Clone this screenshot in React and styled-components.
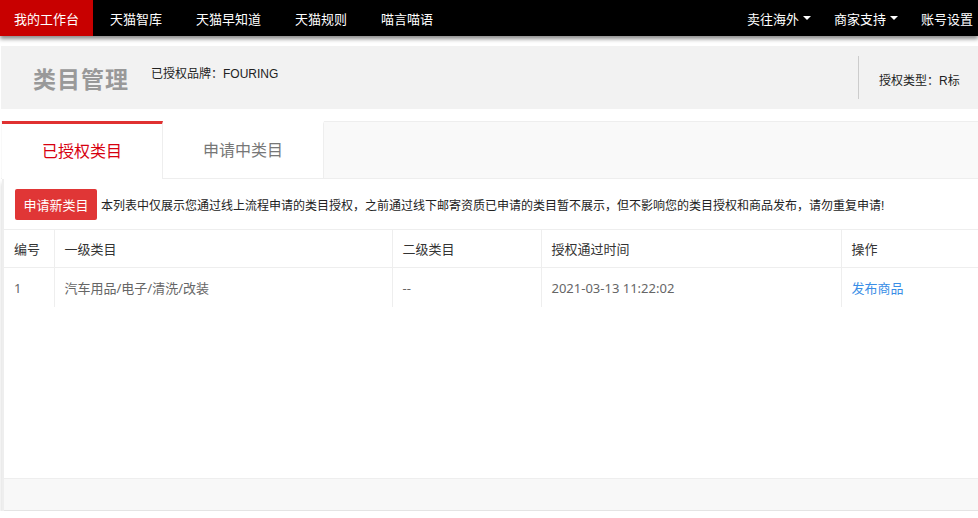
import React from 'react';
import styled, { createGlobalStyle } from 'styled-components';

const GlobalStyle = createGlobalStyle`
  html, body {
    margin: 0;
    padding: 0;
    background: #fff;
    font-family: 'Liberation Sans', Arial, 'Noto Sans CJK SC', sans-serif;
    font-size: 12px;
    color: #333;
  }
`;

const TopNav = styled.div`
  height: 36px;
  background: #000;
  display: flex;
  align-items: stretch;
  box-shadow: 0 3px 4px rgba(0, 0, 0, 0.45);
  position: relative;
  z-index: 2;
`;

const NavGroup = styled.div`
  display: flex;
`;

const RightGroup = styled.div`
  display: flex;
  margin-left: auto;
  padding-right: 5px;
  gap: 23px;
`;

const NavItem = styled.div`
  display: flex;
  align-items: center;
  padding: 0 ${(p) => p.$pad ?? 16}px;
  color: #fff;
  font-size: 13px;
  background: ${(p) => (p.$active ? '#c80000' : 'transparent')};
  white-space: nowrap;
`;

const Caret = styled.span`
  display: inline-block;
  width: 0;
  height: 0;
  margin-left: 4px;
  border-left: 4px solid transparent;
  border-right: 4px solid transparent;
  border-top: 4px solid #fff;
`;

const Page = styled.div`
  padding: 10px 0 0 1px;
`;

const Header = styled.div`
  background: #f2f2f2;
  height: 63px;
  display: flex;
  align-items: center;
  padding-left: 32px;
`;

const Title = styled.h1`
  margin: 0;
  font-size: 23px;
  font-weight: bold;
  color: #999;
  font-family: 'Noto Sans CJK SC', sans-serif;
  letter-spacing: 1px;
`;

const Brand = styled.span`
  margin-left: 22px;
  margin-top: -10px;
  font-size: 12px;
  color: #222;
`;

const HeaderRight = styled.div`
  margin-left: auto;
  width: 120px;
  height: 43px;
  border-left: 1px solid #ccc;
  display: flex;
  align-items: center;
  padding-left: 20px;
  font-size: 12px;
  color: #222;
  padding-top: 4px;
  box-sizing: border-box;
`;

const Tabs = styled.div`
  margin-top: 12px;
  display: flex;
  height: 56px;
  background: #f9f9f9;
  border-top: 1px solid #eee;
  border-bottom: 1px solid #eee;
  padding-left: 1px;
`;

const Tab = styled.div`
  width: 161px;
  display: flex;
  align-items: center;
  justify-content: center;
  font-size: 16px;
  background: #fff;
  color: ${(p) => (p.$active ? '#d7000f' : '#777')};
  border-top: 3px solid ${(p) => (p.$active ? '#e03131' : 'transparent')};
  border-right: 1px solid #eee;
  margin-top: -1px;
  margin-bottom: ${(p) => (p.$active ? '-1px' : '0')};
  box-sizing: border-box;
  padding-bottom: 4px;
`;

const Panel = styled.div`
  margin-left: 1px;
  border-left: 2px solid #eee;
  box-shadow: 0 4px 4px rgba(0, 0, 0, 0.2);
`;

const Toolbar = styled.div`
  display: flex;
  align-items: center;
  height: 50px;
  padding-left: 11px;
  gap: 4px;
`;

const RedButton = styled.button`
  height: 31px;
  width: 82px;
  padding: 0;
  border: none;
  border-radius: 2px;
  background: #e03636;
  color: #fff;
  font-size: 13px;
  font-family: inherit;
`;

const Notice = styled.span`
  font-size: 12px;
  color: #222;
`;

const Table = styled.table`
  width: 100%;
  border-collapse: collapse;
  table-layout: fixed;
  border-top: 1px solid #eee;
`;

const Col = styled.col`
  width: ${(p) => p.$w}px;
`;

const Th = styled.th`
  height: 37px;
  text-align: left;
  font-weight: normal;
  font-size: 13px;
  color: #333;
  padding: 0 10px;
  border-right: 1px solid #eee;
  border-bottom: 1px solid #eee;
  &:last-child {
    border-right: none;
  }
`;

const Td = styled.td`
  height: 39px;
  font-size: 13px;
  font-family: 'Noto Sans', 'Noto Sans CJK SC', sans-serif;
  color: #666;
  padding: 0 10px;
  border-right: 1px solid #eee;
  white-space: nowrap;
  &:last-child {
    border-right: none;
  }
`;

const Link = styled.a`
  color: #3a8ee6;
  text-decoration: none;
`;

const Empty = styled.div`
  height: 171px;
`;

const Footer = styled.div`
  height: 31px;
  background: #f8f8f8;
  border-top: 1px solid #eee;
  border-bottom: 1px solid #e4e4e4;
`;

const leftNav = ['我的工作台', '天猫智库', '天猫早知道', '天猫规则', '喵言喵语'];

const columns = [
  { label: '编号', w: 50 },
  { label: '一级类目', w: 338 },
  { label: '二级类目', w: 149 },
  { label: '授权通过时间', w: 300 },
  { label: '操作', w: 138 },
];

const rows = [
  { id: 1, first: '汽车用品/电子/清洗/改装', second: '--', time: '2021-03-13 11:22:02' },
];

export default function App() {
  return (
    <>
      <GlobalStyle />
      <TopNav>
        <NavGroup>
          {leftNav.map((name, i) => (
            <NavItem key={name} $active={i === 0} $pad={i === 0 ? 14 : 17}>
              {name}
            </NavItem>
          ))}
        </NavGroup>
        <RightGroup>
          <NavItem $pad={0}>
            卖往海外<Caret />
          </NavItem>
          <NavItem $pad={0}>
            商家支持<Caret />
          </NavItem>
          <NavItem $pad={0}>账号设置</NavItem>
        </RightGroup>
      </TopNav>

      <Page>
        <Header>
          <Title>类目管理</Title>
          <Brand>已授权品牌：FOURING</Brand>
          <HeaderRight>授权类型：R标</HeaderRight>
        </Header>

        <Tabs>
          <Tab $active>已授权类目</Tab>
          <Tab>申请中类目</Tab>
        </Tabs>

        <Panel>
          <Toolbar>
            <RedButton>申请新类目</RedButton>
            <Notice>
              本列表中仅展示您通过线上流程申请的类目授权，之前通过线下邮寄资质已申请的类目暂不展示，但不影响您的类目授权和商品发布，请勿重复申请!
            </Notice>
          </Toolbar>
          <Table>
            <colgroup>
              {columns.map((c) => (
                <Col key={c.label} $w={c.w} />
              ))}
            </colgroup>
            <thead>
              <tr>
                {columns.map((c) => (
                  <Th key={c.label}>{c.label}</Th>
                ))}
              </tr>
            </thead>
            <tbody>
              {rows.map((r) => (
                <tr key={r.id}>
                  <Td>{r.id}</Td>
                  <Td>{r.first}</Td>
                  <Td>{r.second}</Td>
                  <Td>{r.time}</Td>
                  <Td>
                    <Link href="#">发布商品</Link>
                  </Td>
                </tr>
              ))}
            </tbody>
          </Table>
          <Empty />
          <Footer />
        </Panel>
      </Page>
    </>
  );
}
